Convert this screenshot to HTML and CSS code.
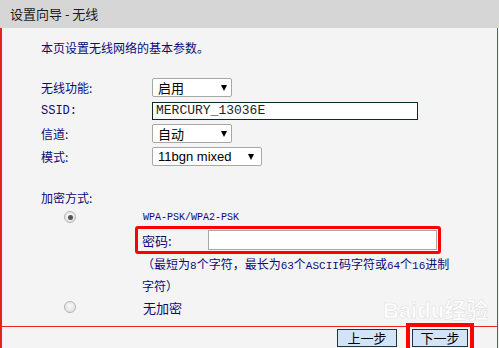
FILE: index.html
```html
<!DOCTYPE html>
<html lang="zh-CN">
<head>
<meta charset="utf-8">
<title>设置向导 - 无线</title>
<link rel="stylesheet" href="styles.css">
</head>
<body>
<div class="header">设置向导 - 无线</div>
<div class="main">
  <div class="panel">
    <p class="intro">本页设置无线网络的基本参数。</p>
    <div class="form">
      <div class="row"><span class="label">无线功能:</span><div class="select w80"><span>启用</span><span class="arrow"></span></div></div>
      <div class="row"><span class="label mono">SSID:</span><div class="text-input">MERCURY_13036E</div></div>
      <div class="row"><span class="label">信道:</span><div class="select w80"><span>自动</span><span class="arrow"></span></div></div>
      <div class="row"><span class="label">模式:</span><div class="select w110"><span class="latin">11bgn mixed</span><span class="arrow"></span></div></div>
    </div>
    <div class="enc-label">加密方式:</div>
    <div class="enc">
      <div class="radio-cell first"><span class="radio checked"></span></div>
      <div class="enc-text first mono-sm">WPA-PSK/WPA2-PSK</div>
      <div></div>
      <div class="enc-body">
        <div class="pwd-box"><span class="pwd-label">密码:</span><span class="pwd-input"></span></div>
        <p class="note">（最短为<span class="mono-n">8</span>个字符，最长为<span class="mono-n">63</span>个<span class="mono-n">ASCII</span>码字符或<span class="mono-n">64</span>个<span class="mono-n">16</span>进制<br>字符）</p>
      </div>
      <div class="radio-cell second"><span class="radio"></span></div>
      <div class="enc-text second">无加密</div>
    </div>
  </div>
  <div class="footer">
    <button class="btn prev">上一步</button>
    <button class="btn next">下一步</button>
  </div>
</div>
<div class="watermark">Bai<span class="paw">du</span>经验</div>
</body>
</html>
```
FILE: styles.css
```css
html, body {
  margin: 0;
  padding: 0;
}
body {
  width: 499px;
  height: 348px;
  overflow: hidden;
  background: #f4f4f4;
  font-family: "Noto Sans CJK SC", "Noto Sans", sans-serif;
  position: relative;
}
.header {
  height: 28px;
  line-height: 28px;
  background: #d6d6d6;
  color: #1c1c1c;
  font-size: 13px;
  padding-left: 10px;
}
.main {
  border-left: 2px solid #e5241c;
  border-right: 1px solid #e5241c;
  margin-right: 1px;
  background: #f4f4f4;
  color: #0b0b78;
  font-size: 12px;
}
.panel {
  height: 298px;
  box-sizing: border-box;
  padding-top: 10px;
}
.intro {
  margin: 0 0 0 39px;
  line-height: 20px;
}
.form {
  margin: 18px 0 0 39px;
}
.row {
  height: 23px;
  display: flex;
  align-items: center;
}
.label {
  width: 111px;
  flex: none;
}
.mono {
  font-family: "Liberation Mono", monospace;
  font-size: 12px;
}
.select {
  height: 19px;
  box-sizing: border-box;
  border: 1px solid #a7a7a7;
  border-radius: 2px;
  background: #fff;
  color: #000;
  font-size: 13px;
  display: flex;
  align-items: center;
  justify-content: space-between;
  padding: 0 4px 0 5px;
}
.select.w80 { width: 80px; }
.select.w110 { width: 110px; padding-right: 7px; }
.latin {
  font-family: "Liberation Sans", Arial, sans-serif;
  font-size: 13px;
}
.arrow {
  width: 0;
  height: 0;
  border-left: 3.5px solid transparent;
  border-right: 3.5px solid transparent;
  border-top: 6px solid #000;
}
.text-input {
  width: 266px;
  height: 18px;
  box-sizing: border-box;
  border: 1px solid #0c2a2a;
  background: #fff;
  color: #222;
  font-family: "Liberation Mono", monospace;
  font-size: 13px;
  line-height: 16px;
  padding-left: 3px;
}
.enc-label {
  margin: 20px 0 0 39px;
  line-height: 20px;
}
.enc {
  display: grid;
  grid-template-columns: 133px 1fr;
}
.radio-cell {
  display: flex;
  align-items: center;
  padding-left: 62px;
}
.radio-cell.first, .enc-text.first { height: 18px; }
.radio-cell.second, .enc-text.second { height: 22px; margin-top: 1px; }
.radio {
  width: 12px;
  height: 12px;
  box-sizing: border-box;
  border-radius: 50%;
  border: 1px solid #b4b4b4;
  background: radial-gradient(circle at 50% 40%, #f8f8f8 0%, #dcdcdc 100%);
  display: flex;
  align-items: center;
  justify-content: center;
}
.radio.checked::after {
  content: "";
  width: 5px;
  height: 5px;
  border-radius: 50%;
  background: #555;
}
.enc-text {
  display: flex;
  align-items: center;
  padding-left: 8px;
}
.enc-text.second { font-size: 13px; }
.mono-sm {
  font-family: "Liberation Mono", monospace;
  font-size: 10px;
}
.pwd-box {
  width: 306px;
  height: 28px;
  box-sizing: border-box;
  border: 3px solid #ff0000;
  border-radius: 3px;
  display: flex;
  align-items: center;
}
.pwd-label {
  width: 70px;
  padding-left: 4px;
  box-sizing: border-box;
  font-size: 13px;
}
.pwd-input {
  width: 229px;
  height: 20px;
  box-sizing: border-box;
  border: 1px solid #a8a8a8;
  background: #fff;
}
.note {
  margin: 0;
  padding-left: 7px;
  line-height: 19px;
  white-space: nowrap;
}
.mono-n {
  font-family: "Liberation Mono", monospace;
  font-size: 11px;
}
.footer {
  border-top: 1px solid #e5241c;
  display: flex;
  justify-content: flex-end;
  align-items: flex-start;
  padding: 2px 29px 0 0;
  box-sizing: border-box;
  height: 22px;
}
.btn {
  height: 18px;
  padding: 0;
  margin: 0;
  border: 1px solid #1d3838;
  background: #d4e4f8;
  color: #000;
  font-family: "Noto Sans CJK SC", sans-serif;
  font-size: 13px;
  line-height: 16px;
}
.btn.prev { width: 60px; margin-right: 15px; }
.btn.next {
  width: 56px;
  outline: 4px solid #ff0000;
  outline-offset: 2px;
}
.watermark {
  position: absolute;
  left: 383px;
  top: 300px;
  font-family: "Liberation Sans", "Noto Sans CJK SC", sans-serif;
  font-weight: bold;
  font-size: 22px;
  line-height: 22px;
  color: rgba(255, 255, 255, 0.85);
  -webkit-text-stroke: 0.5px rgba(190, 190, 190, 0.5);
  pointer-events: none;
}
```
